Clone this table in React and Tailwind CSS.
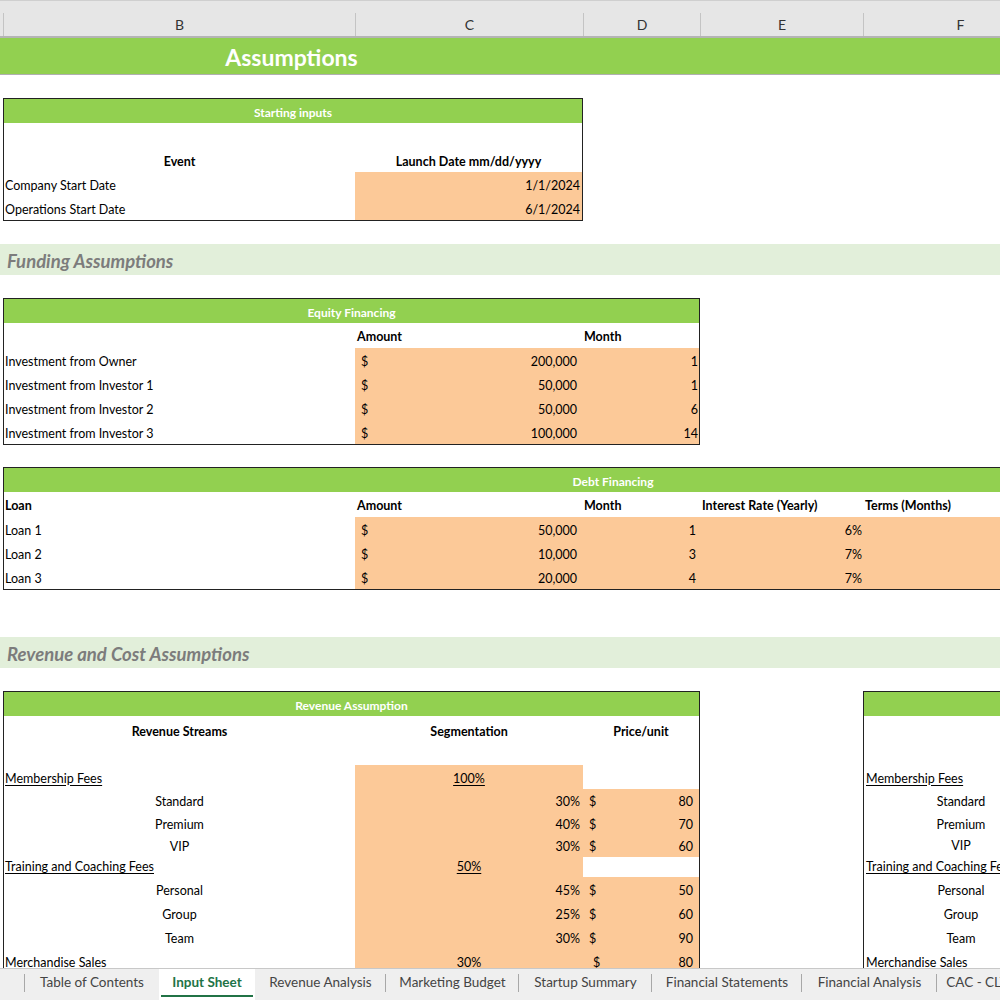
import React from "react";

const GREEN = "bg-[#92d050]";
const ORANGE = "bg-[#fcc998]";
const C = "flex items-center pt-[4px]";

function ColumnHeader() {
  const cols = [
    { w: "w-[3px]", l: "" },
    { w: "w-[352px]", l: "B" },
    { w: "w-[228px]", l: "C" },
    { w: "w-[117px]", l: "D" },
    { w: "w-[163px]", l: "E" },
    { w: "w-[194px]", l: "F" },
  ];
  return (
    <div className="h-[38px] shrink-0 bg-[#e6e6e6] border-b-2 border-[#b4b4b4] flex flex-col">
      <div className="h-[13px] border-t border-[#cfcfcf]" />
      <div className="flex-1 flex">
        {cols.map((c, i) => (
          <div
            key={i}
            className={`${c.w} shrink-0 flex items-center justify-center text-[14px] text-[#333] ${
              i > 0 ? "border-l border-[#c4c4c4]" : ""
            }`}
          >
            {c.l}
          </div>
        ))}
      </div>
    </div>
  );
}

function Band({ children }) {
  return (
    <div className="h-[31px] bg-[#e2efda] flex items-center pt-[4px] pl-[7px] text-[18.5px] italic font-bold text-[#7c7c7c]">
      {children}
    </div>
  );
}

function GreenHead({ children, center = "w-full" }) {
  return (
    <div className={`h-[24px] ${GREEN} flex items-center pt-[4px] overflow-hidden`}>
      <div className={`${center} shrink-0 text-center text-white font-bold text-[12px]`}>{children}</div>
    </div>
  );
}

function StartingInputs() {
  return (
    <div className="ml-[3px] w-[580px] border border-[#222]">
      <GreenHead>Starting inputs</GreenHead>
      <div className="h-[25px]" />
      <div className="h-[24px] grid grid-cols-[351px_227px] font-bold">
        <div className={`${C} justify-center`}>Event</div>
        <div className={`${C} justify-center`}>Launch Date mm/dd/yyyy</div>
      </div>
      {[
        ["Company Start Date", "1/1/2024"],
        ["Operations Start Date", "6/1/2024"],
      ].map(([a, b]) => (
        <div key={a} className="h-[24px] grid grid-cols-[351px_227px]">
          <div className={`${C} pl-[1px]`}>{a}</div>
          <div className={`${C} justify-end pr-[2px] ${ORANGE}`}>{b}</div>
        </div>
      ))}
    </div>
  );
}

function Equity() {
  const rows = [
    ["Investment from Owner", "200,000", "1"],
    ["Investment from Investor 1", "50,000", "1"],
    ["Investment from Investor 2", "50,000", "6"],
    ["Investment from Investor 3", "100,000", "14"],
  ];
  return (
    <div className="ml-[3px] w-[697px] border border-[#222]">
      <GreenHead>Equity Financing</GreenHead>
      <div className="h-[25px] grid grid-cols-[351px_228px_116px] font-bold">
        <div />
        <div className={`${C} pl-[2px]`}>Amount</div>
        <div className={`${C} pl-[1px]`}>Month</div>
      </div>
      {rows.map(([a, b, c]) => (
        <div key={a} className="h-[24px] grid grid-cols-[351px_228px_116px]">
          <div className={`${C} pl-[1px]`}>{a}</div>
          <div className={`${C} justify-between pl-[6px] pr-[6px] ${ORANGE}`}>
            <span>$</span>
            <span>{b}</span>
          </div>
          <div className={`${C} justify-end pr-[1px] ${ORANGE}`}>{c}</div>
        </div>
      ))}
    </div>
  );
}

function Debt() {
  const rows = [
    ["Loan 1", "50,000", "1", "6%"],
    ["Loan 2", "10,000", "3", "7%"],
    ["Loan 3", "20,000", "4", "7%"],
  ];
  const cols = "grid grid-cols-[351px_228px_117px_163px_240px]";
  return (
    <div className="ml-[3px] w-[1100px] border border-[#222]">
      <GreenHead center="w-[1218px]">Debt Financing</GreenHead>
      <div className={`h-[25px] ${cols} font-bold`}>
        <div className={`${C} pl-[1px]`}>Loan</div>
        <div className={`${C} pl-[2px]`}>Amount</div>
        <div className={`${C} pl-[1px]`}>Month</div>
        <div className={`${C} pl-[2px]`}>Interest Rate (Yearly)</div>
        <div className={`${C} pl-[2px]`}>Terms (Months)</div>
      </div>
      {rows.map(([a, b, c, d]) => (
        <div key={a} className={`h-[24px] ${cols}`}>
          <div className={`${C} pl-[1px]`}>{a}</div>
          <div className={`${C} justify-between pl-[6px] pr-[6px] ${ORANGE}`}>
            <span>$</span>
            <span>{b}</span>
          </div>
          <div className={`${C} justify-end pr-[4px] ${ORANGE}`}>{c}</div>
          <div className={`${C} justify-end pr-[1px] ${ORANGE}`}>{d}</div>
          <div className={ORANGE} />
        </div>
      ))}
    </div>
  );
}

const revRows = [
  { type: "head", label: "Membership Fees", seg: "100%", h: "h-[24px]" },
  { type: "sub", label: "Standard", seg: "30%", price: "80", h: "h-[23px]" },
  { type: "sub", label: "Premium", seg: "40%", price: "70", h: "h-[22px]" },
  { type: "sub", label: "VIP", seg: "30%", price: "60", h: "h-[20px]" },
  { type: "head", label: "Training and Coaching Fees", seg: "50%", h: "h-[23px]" },
  { type: "sub", label: "Personal", seg: "45%", price: "50", h: "h-[24px]" },
  { type: "sub", label: "Group", seg: "25%", price: "60", h: "h-[24px]" },
  { type: "sub", label: "Team", seg: "30%", price: "90", h: "h-[24px]" },
  { type: "merch", label: "Merchandise Sales", seg: "30%", price: "80", h: "h-[24px]" },
];

function Revenue() {
  const cols = "grid grid-cols-[351px_228px_116px]";
  return (
    <div className="ml-[3px] w-[697px] border-t border-l border-r border-[#222]">
      <GreenHead>Revenue Assumption</GreenHead>
      <div className={`h-[28px] ${cols} font-bold`}>
        <div className={`${C} justify-center`}>Revenue Streams</div>
        <div className={`${C} justify-center`}>Segmentation</div>
        <div className={`${C} justify-center`}>Price/unit</div>
      </div>
      <div className="h-[21px]" />
      {revRows.map((r) => (
        <div key={r.label} className={`${r.h} ${cols}`}>
          {r.type === "sub" ? (
            <div className={`${C} justify-center`}>{r.label}</div>
          ) : (
            <div className={`${C} pl-[1px]`}>
              <span className={r.type === "merch" ? "" : "underline underline-offset-2"}>{r.label}</span>
            </div>
          )}
          {r.type === "sub" ? (
            <div className={`${C} justify-end pr-[3px] ${ORANGE}`}>{r.seg}</div>
          ) : (
            <div className={`${C} justify-center ${ORANGE}`}>
              <span className={r.type === "merch" ? "" : "underline underline-offset-2"}>{r.seg}</span>
            </div>
          )}
          {r.type === "head" ? (
            <div />
          ) : (
            <div className={`${C} justify-between pl-[6px] pr-[6px] ${ORANGE}`}>
              <span className={r.type === "merch" ? "pl-[4px]" : ""}>$</span>
              <span>{r.price}</span>
            </div>
          )}
        </div>
      ))}
    </div>
  );
}

function RightTable() {
  return (
    <div className="w-[200px] shrink-0 border-t border-l border-[#222]">
      <div className={`h-[24px] ${GREEN}`} />
      <div className="h-[28px]" />
      <div className="h-[21px]" />
      {revRows.map((r) => (
        <div key={r.label} className={`${r.h} w-[194px] ${C}`}>
          {r.type === "sub" ? (
            <div className="w-full text-center">{r.label}</div>
          ) : (
            <div className="pl-[2px] whitespace-nowrap">
              <span className={r.type === "merch" ? "" : "underline underline-offset-2"}>{r.label}</span>
            </div>
          )}
        </div>
      ))}
    </div>
  );
}

function Sheet() {
  return (
    <div className="flex flex-col">
      <div className={`h-[37px] ${GREEN} border-b border-[#b0b0b0] flex items-center pt-[2px]`}>
        <div className="w-[583px] text-center text-white font-bold text-[23px]">Assumptions</div>
      </div>
      <div className="h-[23px]" />
      <StartingInputs />
      <div className="h-[23px]" />
      <Band>Funding Assumptions</Band>
      <div className="h-[23px]" />
      <Equity />
      <div className="h-[22px]" />
      <Debt />
      <div className="h-[47px]" />
      <Band>Revenue and Cost Assumptions</Band>
      <div className="h-[23px]" />
      <div className="flex">
        <Revenue />
        <div className="w-[163px] shrink-0" />
        <RightTable />
      </div>
    </div>
  );
}

function Tabs() {
  const tabs = [
    ["Table of Contents", "w-[134px]"],
    ["Input Sheet", "w-[96px]"],
    ["Revenue Analysis", "w-[131px]"],
    ["Marketing Budget", "w-[133px]"],
    ["Startup Summary", "w-[133px]"],
    ["Financial Statements", "w-[150px]"],
    ["Financial Analysis", "w-[135px]"],
    ["CAC - CLTV Analysis", "w-[140px]"],
  ];
  return (
    <div className="h-[32px] shrink-0 bg-[#efefef] border-t border-[#c8c8c8] flex overflow-hidden">
      <div className="w-[25px] shrink-0 flex items-center pb-[3px]">
        <div className="ml-auto h-[18px] border-r border-[#a8a8a8]" />
      </div>
      {tabs.map(([t, w], i) => {
        const active = i === 1;
        const nextActive = i + 1 === 1;
        return (
          <div
            key={t}
            className={`${w} shrink-0 relative flex items-center justify-center pb-[4px] whitespace-nowrap text-[13.5px] ${
              active ? "bg-white text-[#217346] font-bold -mt-[1px]" : "text-[#444]"
            }`}
          >
            <span>{t}</span>
            {active && <div className="absolute left-[2px] right-[2px] bottom-[3px] h-[2px] bg-[#217346]" />}
            {!active && !nextActive && (
              <div className="absolute right-0 top-[5px] h-[18px] border-r border-[#a8a8a8]" />
            )}
          </div>
        );
      })}
    </div>
  );
}

export default function App() {
  return (
    <div className="w-[1000px] h-[1000px] overflow-hidden flex flex-col bg-white text-black text-[12.5px] font-[family-name:Lato,'Liberation_Sans',sans-serif]">
      <ColumnHeader />
      <div className="flex-1 overflow-hidden">
        <Sheet />
      </div>
      <Tabs />
    </div>
  );
}
